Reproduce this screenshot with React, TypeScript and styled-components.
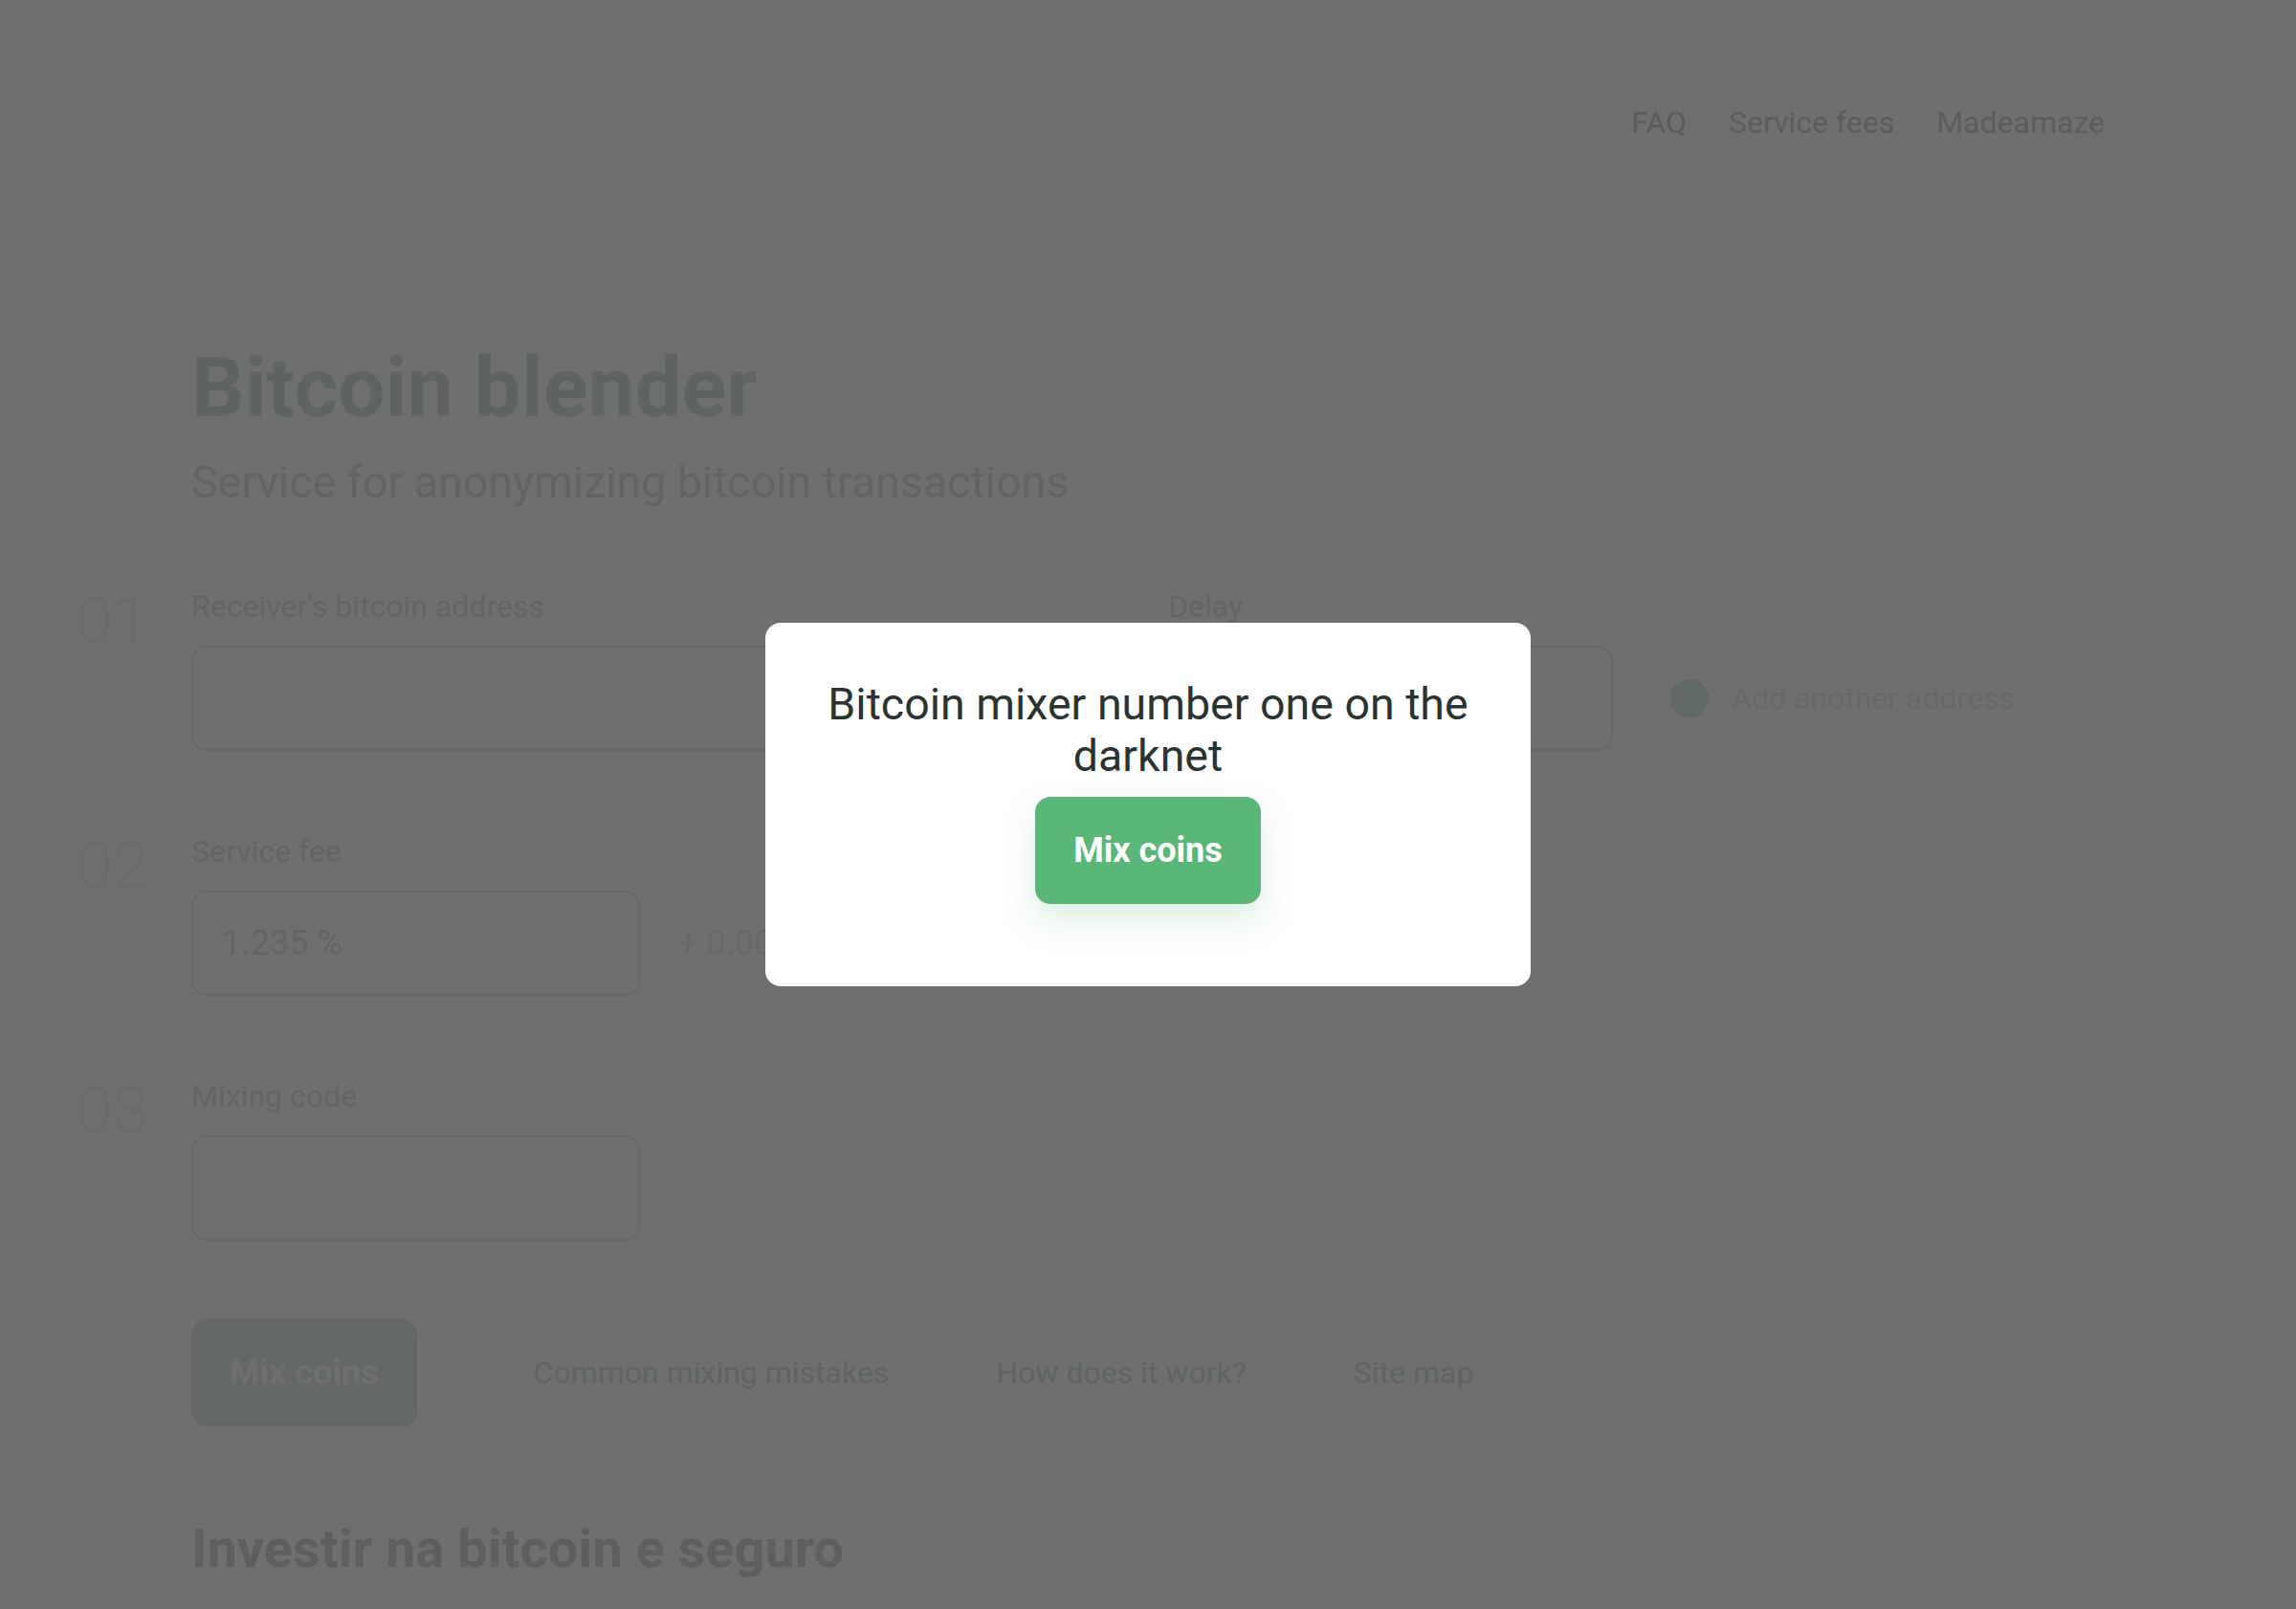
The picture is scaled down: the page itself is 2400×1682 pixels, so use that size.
import React from "react";
import styled, { createGlobalStyle } from "styled-components";

const GlobalStyle = createGlobalStyle`
  html, body {
    margin: 0;
    padding: 0;
    background: #ffffff;
  }
  body {
    font-family: Roboto, "Liberation Sans", Arial, sans-serif;
  }
  * {
    box-sizing: border-box;
  }
`;

const Page = styled.div`
  width: 2000px;
  margin: 0 auto;
  padding-bottom: 120px;
`;

const Header = styled.header`
  display: flex;
  justify-content: flex-end;
  padding-top: 109px;
`;

const Nav = styled.nav`
  display: flex;
  gap: 44px;
`;

const NavLink = styled.a`
  font-size: 32px;
  line-height: 38px;
  color: #d4d4d4;
  text-decoration: none;
`;

const Hero = styled.section`
  margin-top: 206px;
`;

const Title = styled.h1`
  margin: 0;
  font-size: 87px;
  line-height: 104px;
  font-weight: 700;
  color: #d8e8de;
`;

const Subtitle = styled.p`
  margin: 19px 0 0;
  font-size: 46.5px;
  line-height: 56px;
  font-weight: 400;
  color: #e4e4e4;
`;

const Form = styled.form`
  margin-top: 83px;
  display: flex;
  flex-direction: column;
  gap: 86px;
`;

const Step = styled.div`
  display: grid;
  grid-template-columns: 120px 1fr;
  margin-left: -120px;
`;

const StepNumber = styled.span`
  font-size: 68px;
  line-height: 68px;
  font-weight: 300;
  color: #f5f5f5;
`;

const Fields = styled.div`
  display: flex;
  align-items: flex-end;
  gap: 40px;
`;

const Field = styled.div<{ $width: number }>`
  display: flex;
  flex-direction: column;
  gap: 22px;
  width: ${(p) => p.$width}px;
`;

const Label = styled.label`
  font-size: 32px;
  line-height: 38px;
  color: #e6e6e6;
`;

const InputBox = styled.div`
  height: 110px;
  border: 2px solid #efefef;
  border-radius: 16px;
  display: flex;
  align-items: center;
  padding: 0 30px;
  font-size: 36px;
  color: #e6e6e6;
`;

const Aside = styled.div<{ $shift?: number }>`
  height: 110px;
  display: flex;
  align-items: center;
  gap: 24px;
  margin-left: ${(p) => p.$shift ?? 0}px;
`;

const Dot = styled.span`
  width: 40px;
  height: 40px;
  border-radius: 50%;
  background: #dcf0e4;
`;

const AsideText = styled.span<{ $size: number }>`
  font-size: ${(p) => p.$size}px;
  color: #efefef;
`;

const Actions = styled.div`
  margin-top: 82px;
  display: flex;
  align-items: center;
`;

const Button = styled.button<{ $muted?: boolean }>`
  height: 112px;
  padding: 0 40px;
  border: none;
  border-radius: 16px;
  font-family: Roboto, "Liberation Sans", Arial, sans-serif;
  font-size: 36px;
  font-weight: 700;
  color: #ffffff;
  background: ${(p) => (p.$muted ? "#e3efe7" : "#5bb679")};
  box-shadow: ${(p) =>
    p.$muted ? "none" : "0 16px 34px rgba(91, 182, 121, 0.22)"};
  cursor: pointer;
`;

const Links = styled.div`
  display: flex;
  gap: 112px;
  margin-left: 122px;
`;

const TextLink = styled.a`
  font-size: 32px;
  line-height: 38px;
  color: #d8e6dc;
  text-decoration: none;
`;

const SectionTitle = styled.h2`
  margin: 95px 0 0;
  font-size: 56px;
  line-height: 66px;
  font-weight: 700;
  color: #d6ddd8;
`;

const Overlay = styled.div`
  position: fixed;
  inset: 0;
  background: rgba(0, 0, 0, 0.565);
  display: flex;
  align-items: center;
  justify-content: center;
`;

const Modal = styled.div`
  width: 800px;
  background: #ffffff;
  border-radius: 16px;
  padding: 58px 60px 86px;
  display: flex;
  flex-direction: column;
  align-items: center;
  text-align: center;
`;

const ModalTitle = styled.h3`
  margin: 0 0 16px;
  font-size: 46.5px;
  line-height: 54px;
  font-weight: 400;
  color: #2b3330;
`;

export default function App() {
  return (
    <>
      <GlobalStyle />
      <Page>
        <Header>
          <Nav>
            <NavLink href="#">FAQ</NavLink>
            <NavLink href="#">Service fees</NavLink>
            <NavLink href="#">Madeamaze</NavLink>
          </Nav>
        </Header>
        <Hero>
          <Title>Bitcoin blender</Title>
          <Subtitle>Service for anonymizing bitcoin transactions</Subtitle>
        </Hero>
        <Form onSubmit={(e) => e.preventDefault()}>
          <Step>
            <StepNumber>01</StepNumber>
            <Fields>
              <Field $width={981}>
                <Label>Receiver's bitcoin address</Label>
                <InputBox />
              </Field>
              <Field $width={465}>
                <Label>Delay</Label>
                <InputBox />
              </Field>
              <Aside $shift={20}>
                <Dot />
                <AsideText $size={32}>Add another address</AsideText>
              </Aside>
            </Fields>
          </Step>
          <Step>
            <StepNumber>02</StepNumber>
            <Fields>
              <Field $width={469}>
                <Label>Service fee</Label>
                <InputBox>1.235 %</InputBox>
              </Field>
              <Aside>
                <AsideText $size={36}>+ 0.0008 BTC</AsideText>
              </Aside>
            </Fields>
          </Step>
          <Step>
            <StepNumber>03</StepNumber>
            <Fields>
              <Field $width={469}>
                <Label>Mixing code</Label>
                <InputBox />
              </Field>
            </Fields>
          </Step>
        </Form>
        <Actions>
          <Button $muted type="button">Mix coins</Button>
          <Links>
            <TextLink href="#">Common mixing mistakes</TextLink>
            <TextLink href="#">How does it work?</TextLink>
            <TextLink href="#">Site map</TextLink>
          </Links>
        </Actions>
        <SectionTitle>Investir na bitcoin e seguro</SectionTitle>
      </Page>
      <Overlay>
        <Modal>
          <ModalTitle>Bitcoin mixer number one on the darknet</ModalTitle>
          <Button type="button">Mix coins</Button>
        </Modal>
      </Overlay>
    </>
  );
}
